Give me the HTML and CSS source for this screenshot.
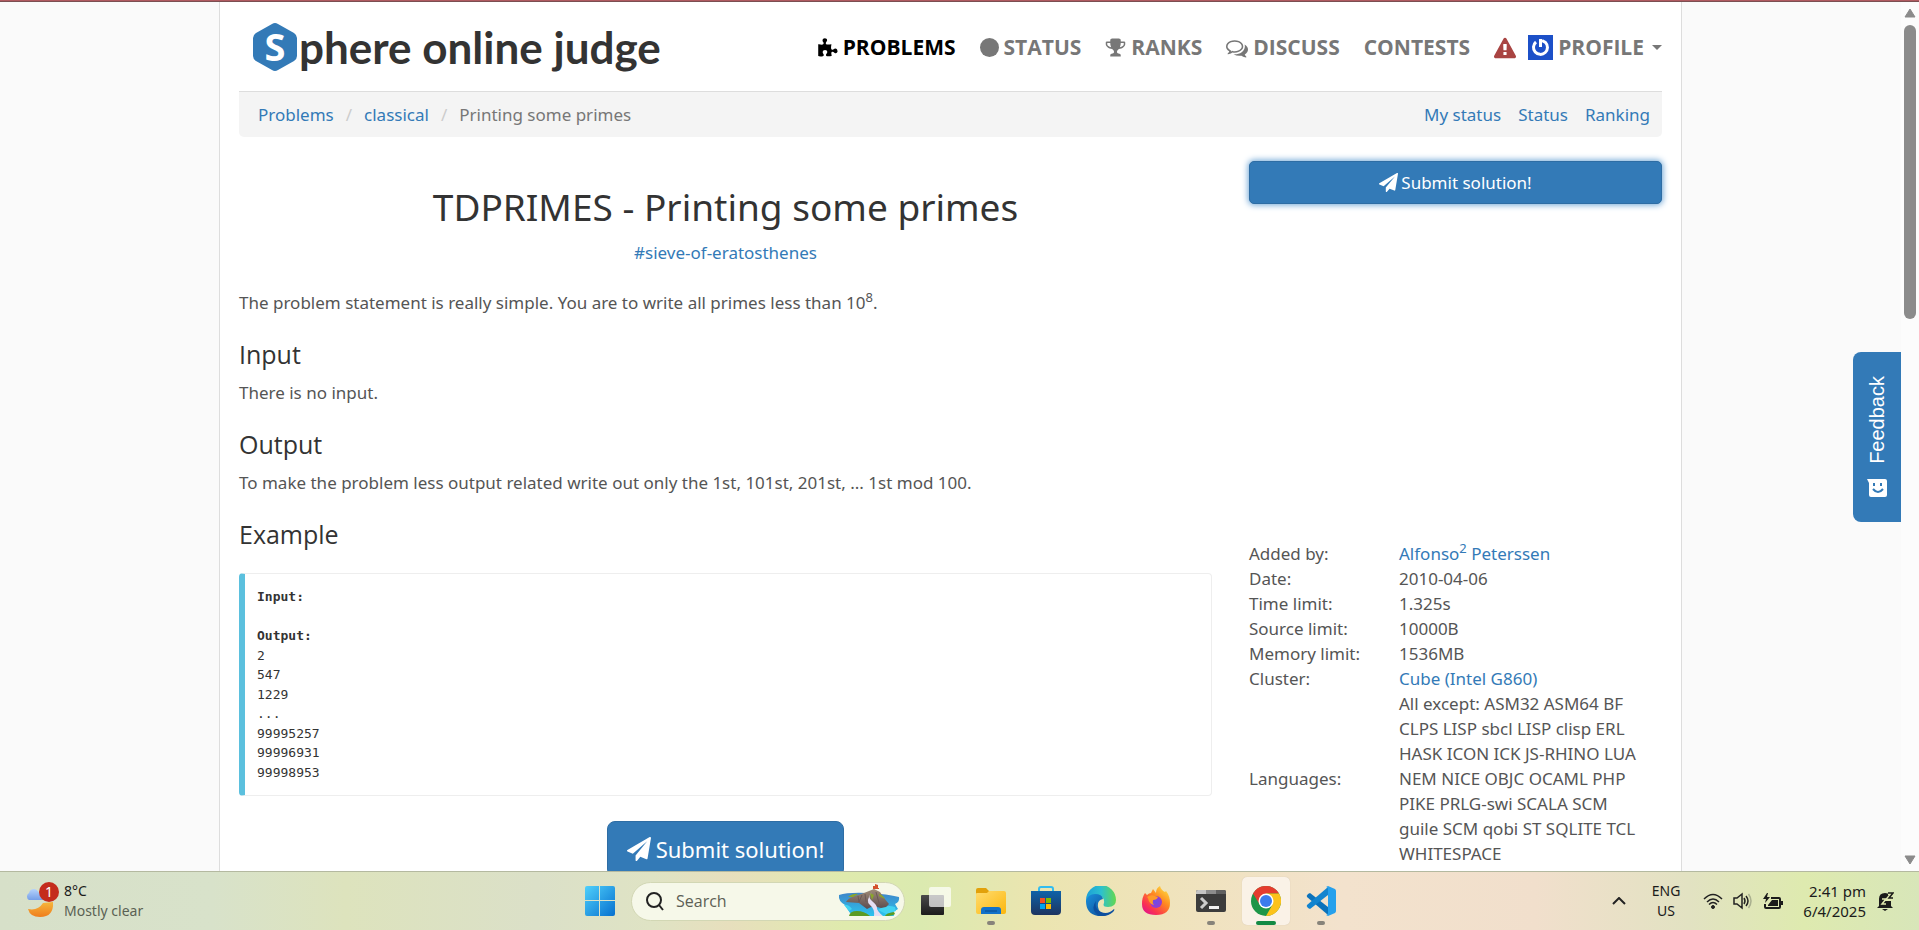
FILE: index.html
```html
<!DOCTYPE html>
<html lang="en">
<head>
<meta charset="utf-8">
<title>SPOJ.com - Problem TDPRIMES</title>
<link rel="stylesheet" href="styles.css">
</head>
<body>
<svg class="defs" width="0" height="0" aria-hidden="true">
  <defs>
    <symbol id="plane" viewBox="0 0 1792 1792"><path fill="currentColor" d="M1764 11q33 24 27 64l-256 1536q-5 29-32 45-14 8-31 8-11 0-24-5l-453-185-242 295q-18 23-49 23-13 0-22-4-19-7-30.500-23.500T640 1728v-349l864-1059-1069 925-395-162q-37-14-40-55-2-40 32-59L1696 9q15-9 32-9 20 0 36 11z"/></symbol>
    <linearGradient id="gWin" x1="0" y1="0" x2="1" y2="1"><stop offset="0" stop-color="#4fd0fb"/><stop offset="1" stop-color="#0670cf"/></linearGradient>
    <linearGradient id="gMoon" x1="0" y1="0" x2="0" y2="1"><stop offset="0" stop-color="#f6b73c"/><stop offset="1" stop-color="#ef7d1c"/></linearGradient>
    <linearGradient id="gCloud" x1="0" y1="0" x2="0" y2="1"><stop offset="0" stop-color="#b5d3fb"/><stop offset="1" stop-color="#769fe8"/></linearGradient>
    <linearGradient id="gDark" x1="0" y1="0" x2="0" y2="1"><stop offset="0" stop-color="#4a4a4a"/><stop offset="1" stop-color="#1c1c1c"/></linearGradient>
    <linearGradient id="gFold" x1="0" y1="0" x2="1" y2="1"><stop offset="0" stop-color="#ffdc70"/><stop offset="1" stop-color="#fcb70c"/></linearGradient>
    <linearGradient id="gStore" x1="0" y1="0" x2="0" y2="1"><stop offset="0" stop-color="#0f62a8"/><stop offset="1" stop-color="#1d3460"/></linearGradient>
    <linearGradient id="gEdge" x1="0" y1="0" x2="1" y2="0"><stop offset="0" stop-color="#1c9fd8"/><stop offset="0.500" stop-color="#2cc0cf"/><stop offset="1" stop-color="#63d850"/></linearGradient>
    <linearGradient id="gEdge2" x1="0" y1="0" x2="1" y2="1"><stop offset="0" stop-color="#1b8fdb"/><stop offset="1" stop-color="#0c4a94"/></linearGradient>
    <linearGradient id="gFox" x1="1" y1="0" x2="0.200" y2="1"><stop offset="0" stop-color="#fff24a"/><stop offset="0.450" stop-color="#ff8a20"/><stop offset="0.800" stop-color="#fb3350"/><stop offset="1" stop-color="#e3158a"/></linearGradient>
    <radialGradient id="gFoxIn"><stop offset="0" stop-color="#6b4de8"/><stop offset="1" stop-color="#9a3bc9"/></radialGradient>
    <linearGradient id="gSea" x1="0" y1="0" x2="0" y2="1"><stop offset="0" stop-color="#3f86c9"/><stop offset="1" stop-color="#2cc3ee"/></linearGradient>
    <linearGradient id="gRock" x1="0" y1="0" x2="0" y2="1"><stop offset="0" stop-color="#a08c77"/><stop offset="1" stop-color="#5c4c50"/></linearGradient>
  </defs>
</svg>

<div class="viewport">
  <div class="scroll-area">
    <div class="container">
      <header class="header">
        <a class="logo" href="#" aria-label="Sphere online judge">
          <span class="logo-mark">
            <svg width="44" height="48" viewBox="0 0 44 48" aria-hidden="true"><path fill="#337ab7" d="M19 1q3-2 6 0l16 9q3 2 3 5v18q0 3-3 5l-16 9q-3 2-6 0L3 38q-3-2-3-5V15q0-3 3-5z"/></svg>
            <span class="logo-s">S</span>
          </span>
          <span class="logo-text">phere online judge</span>
        </a>
        <nav class="nav">
          <a class="active" href="#"><svg width="20" height="20" viewBox="70 -50 1720 1720" aria-hidden="true"><path fill="currentColor" d="M1755 1062q0 81-44.500 135T1587 1251q-41 0-77.500-17.500t-59-38-56.500-38-71-17.500q-110 0-110 124 0 39 16 115t15 115v5q-22 0-33 1-34 3-97.500 11.500T997 1525t-98 5q-61 0-103-26.500t-42-83.500q0-37 17.500-71t38-56.500 38-59T865 1156q0-79-54-123.500T675 988q-84 0-143 45.500T473 1161q0 43 15 83t33.500 64.500 33.500 53 15 50.500q0 45-46 89-37 35-117 35-95 0-245-24l-55-8-18-3V484q2 1 17.500 3.500t34 5T148 496q150 24 245 24 80 0 117-35 46-44 46-89 0-22-15-50.500t-33.500-53T474 228t-15-83q0-82 59-127.500T662-28q80 0 134 44.500T850 140q0 41-17.500 77.500t-38 59-38 56.500-17.500 71q0 57 42 83.500T884 514q64 0 180-15t163-17v2q-1 2-3.500 17.500t-5 34T1215 551q-24 150-24 245 0 80 35 117 44 46 89 46 22 0 50.500-15t53-33.500T1483 877t83-15q82 0 127.500 59t45.500 143z"/></svg>PROBLEMS</a>
          <a href="#"><svg width="19" height="19" viewBox="0 0 19 19" aria-hidden="true"><circle cx="9.500" cy="9.500" r="9.500" fill="currentColor"/></svg>STATUS</a>
          <a href="#"><svg width="21" height="21" viewBox="0 64 1792 1664" aria-hidden="true"><path fill="currentColor" d="M522 883q-74-162-74-371H192v96q0 78 94.500 162T522 883zm1078-275v-96h-256q0 209-74 371 141-29 235.500-113t94.500-162zm128-128v128q0 71-41.500 143t-112 130-173 97.500T1186 1021q-42 54-95 95-38 34-52.500 72.500T1024 1280q0 54 30.500 91t97.500 37q75 0 133.500 45.500T1344 1568v64q0 14-9 23t-23 9H480q-14 0-23-9t-9-23v-64q0-69 58.500-114.500T640 1408q67 0 97.500-37t30.500-91q0-53-14.500-91.500T701 1116q-53-41-95-95-113-5-215.500-42.500t-173-97.500-112-130T64 608V480q0-40 28-68t68-28h288v-96q0-66 47-113t113-47h576q66 0 113 47t47 113v96h288q40 0 68 28t28 68z"/></svg>RANKS</a>
          <a href="#"><svg width="22" height="22" viewBox="0 0 1792 1792" aria-hidden="true"><path fill="currentColor" d="M704 384q-153 0-286 52T206.500 577 128 768q0 82 53 158t149 132l97 56-35 84q34-20 62-39l44-31 53 10q78 14 153 14 153 0 286-52t211.500-141T1280 768t-78.500-191T990 436t-286-52zm0-128q191 0 353.500 68.500T1314 511t94 257-94 257-256.500 186.500T704 1280q-86 0-176-16-124 88-278 128-36 9-86 16h-3q-11 0-20.500-8t-11.500-21q-1-3-1-6.500t.5-6.500 2-6l2.500-5 3.500-5.500 4-5 4.500-5 4-4.500q5-6 23-25t26-29.500 22.500-29 25-38.500 20.500-44q-124-72-195-177T0 768q0-139 94-257t256.500-186.500T704 256zm822 1169q10 24 20.500 44t25 38.500 22.500 29 26 29.500 23 25q1 1 4 4.500t4.500 5 4 5 3.500 5.500l2.500 5 2 6 .5 6.500-1 6.500q-3 14-13 22t-22 7q-50-7-86-16-154-40-278-128-90 16-176 16-271 0-472-132 58 4 88 4 161 0 309-45t264-129q125-92 192-212t67-254q0-77-23-152 129 71 204 178t75 230q0 120-71 224.500T1526 1425z"/></svg>DISCUSS</a>
          <a href="#">CONTESTS</a>
          <span class="account">
            <a class="warn" href="#" aria-label="Warning"><svg width="22" height="22" viewBox="0 -60 1792 1792" aria-hidden="true"><path fill="currentColor" d="M1024 1375v-190q0-14-9.500-23.500T992 1152H800q-13 0-22.500 9.500T768 1185v190q0 14 9.500 23.500t22.500 9.500h192q13 0 22.500-9.500t9.500-23.500zm-2-374l18-459q0-12-10-19-13-11-24-11H786q-11 0-24 11-10 7-10 21l17 457q0 10 10 16.500t24 6.500h185q14 0 23.500-6.500t10.500-16.500zm-14-934l768 1408q35 63-2 126-17 29-46.500 46t-63.500 17H128q-34 0-63.500-17T18 1601q-37-63-2-126L784 67q17-31 47-49t65-18 65 18 47 49z"/></svg></a>
            <a href="#"><svg width="25" height="25" viewBox="0 0 25 25" aria-hidden="true"><rect width="25" height="25" fill="#1c50c8"/><path d="M8 7a7 7 0 1 0 9.500.5l-3.500-2" fill="none" stroke="#fff" stroke-width="3"/><path d="M12.500 4v8" stroke="#fff" stroke-width="3"/></svg>PROFILE<i class="caret"></i></a>
          </span>
        </nav>
      </header>

      <div class="crumb-bar">
        <ol class="crumbs">
          <li><a href="#">Problems</a></li>
          <li><a href="#">classical</a></li>
          <li>Printing some primes</li>
        </ol>
        <div class="crumb-links"><a href="#">My status</a><a href="#">Status</a><a href="#">Ranking</a></div>
      </div>

      <div class="row">
        <main class="problem">
          <h1>TDPRIMES - Printing some primes</h1>
          <div class="tags"><a href="#">#sieve-of-eratosthenes</a></div>
          <p>The problem statement is really simple. You are to write all primes less than 10<sup>8</sup>.</p>
          <h2>Input</h2>
          <p>There is no input.</p>
          <h2>Output</h2>
          <p>To make the problem less output related write out only the 1st, 101st, 201st, ... 1st mod 100.</p>
          <h2>Example</h2>
<pre><b>Input:</b>

<b>Output:</b>
2
547
1229
...
99995257
99996931
99998953</pre>
          <div class="submit-row"><button class="btn btn-lg" type="button"><svg width="24" height="24" aria-hidden="true"><use href="#plane"/></svg>Submit solution!</button></div>
        </main>
        <aside class="side">
          <button class="btn btn-focus" type="button"><svg width="19" height="19" aria-hidden="true"><use href="#plane"/></svg>Submit solution!</button>
          <table class="info">
            <tr><th scope="row">Added by:</th><td><a href="#">Alfonso<sup>2</sup> Peterssen</a></td></tr>
            <tr><th scope="row">Date:</th><td>2010-04-06</td></tr>
            <tr><th scope="row">Time limit:</th><td>1.325s</td></tr>
            <tr><th scope="row">Source limit:</th><td>10000B</td></tr>
            <tr><th scope="row">Memory limit:</th><td>1536MB</td></tr>
            <tr><th scope="row">Cluster:</th><td><a href="#">Cube (Intel G860)</a></td></tr>
            <tr><th scope="row">Languages:</th><td>All except: ASM32 ASM64 BF CLPS LISP sbcl LISP clisp ERL HASK ICON ICK JS-RHINO LUA NEM NICE OBJC OCAML PHP PIKE PRLG-swi SCALA SCM guile SCM qobi ST SQLITE TCL WHITESPACE</td></tr>
          </table>
        </aside>
      </div>
    </div>
  </div>

  <button class="feedback" type="button">
    <svg width="20" height="20" viewBox="0 0 20 20" aria-hidden="true"><path fill="#fff" d="M0 1h18q2 0 2 2v14q0 2-2 2H4q-2 0-2-2V5z"/><path d="M6 11q5 6 10 0" fill="none" stroke="#337ab7" stroke-width="2"/><path d="M7 5v3M14 5v3" stroke="#337ab7" stroke-width="2"/></svg>
    <span>Feedback</span>
  </button>

  <div class="scrollbar" aria-hidden="true">
    <svg width="12" height="10" viewBox="0 0 12 10"><path d="M6 1l5 8H1z" fill="#8b8b8b" stroke="#8b8b8b" stroke-linejoin="round"/></svg>
    <div class="thumb"></div>
    <svg class="down" width="12" height="10" viewBox="0 0 12 10"><path d="M6 9l5-8H1z" fill="#8b8b8b" stroke="#8b8b8b" stroke-linejoin="round"/></svg>
  </div>
</div>

<footer class="taskbar">
  <div class="weather">
    <span class="weather-icon">
      <svg width="30" height="34" viewBox="0 0 30 34" aria-hidden="true"><path d="M3 25q10 2 15-6l10-1q1 15-13 15-10 0-12-8z" fill="url(#gMoon)"/><path d="M4 16a4 4 0 0 1 0-7q1-4 5-4 3 0 5 4 5 0 6 7z" fill="url(#gCloud)"/></svg>
      <span class="badge">1</span>
    </span>
    <div class="two-line"><span>8°C</span><span class="muted">Mostly clear</span></div>
  </div>

  <div class="apps">
    <button class="app" type="button" aria-label="Start"><svg width="30" height="30" viewBox="0 0 30 30"><path fill="url(#gWin)" d="M2 0h12v14H0V2q0-2 2-2zM15 0h13q2 0 2 2v12H15zM0 15h14v15H2q-2 0-2-2zM15 15h15v13q0 2-2 2H15z"/></svg></button>
    <label class="search">
      <svg width="18" height="19" viewBox="0 0 18 19" aria-hidden="true"><circle cx="8" cy="8" r="7" fill="none" stroke="#222" stroke-width="2"/><path d="M13 13l4 5" stroke="#222" stroke-width="2"/></svg>
      <input type="text" placeholder="Search" aria-label="Search">
      <svg width="62" height="34" viewBox="0 0 62 34" aria-hidden="true"><path d="M1 11Q10 8 30 9T61 13q1 5-4 7l3 5-5 3 1 4H18l-6-3-2-3-3-5Q0 17 1 11z" fill="url(#gSea)"/><path d="M6 21q4-1 8 4l-3 2zM40 26q8-6 17-3l1 4-10 3z" fill="#42d3f2"/><path d="M8 18q2-4 9-6l9-3 10-4 6 3 4 6 5 6-3 3-5 1-8-2-6 3-8-6z" fill="url(#gRock)"/><path d="M10 13q5-4 10-3l-5 3zM41 10q5 2 6 5l-6-3zM32 9l4 2-2 5z" fill="#8aa52a"/><path d="M20 12l1 6 3-7M27 10l1 8M38 8l3 11" fill="none" stroke="#6a5856"/><path d="M34 8q-5 5 0 9t5 7 6 8h-9q1-7-4-11t2-13z" fill="#e5def2"/><path d="M11 32q1-5 8-5t13 5zM47 32q1-3 9-4l1 2q-3 2-10 2z" fill="#5b9b23"/><path d="M35 5V2h2V0l3 1v3h1v1z" fill="#d4512e"/></svg>
    </label>
    <button class="app" type="button" aria-label="Task view"><svg width="30" height="28" viewBox="0 0 30 28"><rect y="8" width="23" height="20" rx="1" fill="url(#gDark)"/><rect x="8" width="22" height="20" rx="2" fill="#fff" fill-opacity="0.700"/></svg></button>
    <button class="app running" type="button" aria-label="File Explorer"><svg width="30" height="28" viewBox="0 0 30 28"><path d="M0 3q0-2 2-2h8l3 3h15v8H0z" fill="#e2a10b"/><path d="M0 7q0-1 1-1h10l2-2h15q2 0 2 2v19q0 2-2 2H2q-2 0-2-2z" fill="url(#gFold)"/><path d="M5 27v-4q0-3 3-3h14q3 0 3 3v4z" fill="#1272c9"/><path d="M9 24h12" stroke="#0b4a8c" stroke-width="1"/></svg></button>
    <button class="app" type="button" aria-label="Store"><svg width="30" height="30" viewBox="0 0 30 30"><path d="M8 6V3q0-2 2-2h10q2 0 2 2v3" fill="none" stroke="#33bdf0" stroke-width="2"/><path d="M0 5h30v20q0 4-4 4H4q-4 0-4-4z" fill="url(#gStore)"/><path d="M9 12h5v5H9z" fill="#f25022"/><path d="M15 12h5v5h-5z" fill="#7fba00"/><path d="M9 18h5v5H9z" fill="#00a4ef"/><path d="M15 18h5v5h-5z" fill="#ffb900"/></svg></button>
    <button class="app" type="button" aria-label="Edge"><svg width="30" height="30" viewBox="0 0 30 30"><path d="M0 14A15 15 0 0 1 30 14q0 7-8 7-6 0-4-4 1-7-7-7T0 17z" fill="url(#gEdge)"/><path d="M0 15q2-7 9-7 7 0 8 5-6 1-5 8 1 8 11 7-6 3-11 2Q0 28 0 15z" fill="url(#gEdge2)"/><path d="M10 15q-2 8 5 11t13-3q1 1-1 3-7 6-15 3Q4 23 10 15z" fill="#0d4f9e"/></svg></button>
    <button class="app" type="button" aria-label="Firefox"><svg width="28" height="30" viewBox="0 0 28 30"><path d="M3 7l2 2q2-2 4-2l2-4 3 4q0-5 4-7 1 4 5 6l1-1q4 5 4 12 0 12-14 12T0 18Q0 11 3 7z" fill="url(#gFox)"/><circle cx="14" cy="16" r="6" fill="url(#gFoxIn)"/><path d="M5 11q4-3 8-1l3 1q-1 3-5 3-1 3 1 5-5-1-6-7z" fill="#ff9a26"/></svg></button>
    <button class="app running" type="button" aria-label="Terminal"><svg width="30" height="22" viewBox="0 0 30 22"><rect width="30" height="22" rx="2" fill="#3c3c3c"/><path d="M0 4V2q0-2 2-2h8v4z" fill="#c4c4c4"/><path d="M10 0h10v4H10z" fill="#8c8c8c"/><path d="M20 0h8q2 0 2 2v2H20z" fill="#606060"/><path d="M5 8l5 5-5 5" fill="none" stroke="#ccc" stroke-width="3"/><path d="M13 16h10v3H13z" fill="#f0f0f0"/></svg></button>
    <button class="app running current" type="button" aria-label="Chrome"><svg width="30" height="30" viewBox="0 0 30 30"><circle cx="15" cy="15" r="15" fill="#1e9648"/><path d="M2 7.500A15 15 0 0 1 28 7.500H15L9 19z" fill="#e53c2e"/><path d="M28 7.500A15 15 0 0 1 15 30l6.500-11.500L15 7.500z" fill="#fcc21b"/><circle cx="15" cy="15" r="7.500" fill="#fff"/><circle cx="15" cy="15" r="6" fill="#3b7bec"/></svg></button>
    <button class="app running" type="button" aria-label="Visual Studio Code"><svg width="30" height="30" viewBox="0 0 30 30"><path d="M2 8l2-1 18 14v8L1 11q-1-1 1-3z" fill="#0b72bb"/><path d="M2 22l2 1L22 9V1L1 19q-1 1 1 3z" fill="#1284cf"/><path d="M22 0l7 3q1 1 1 2v20q0 1-1 2l-7 3-2-1q2 0 2-2V3q0-2-2-2z" fill="#26a0ec"/></svg></button>
  </div>

  <div class="tray">
    <svg width="14" height="8" viewBox="0 0 14 8" aria-hidden="true"><path d="M1 7l6-6 6 6" fill="none" stroke="#222" stroke-width="2"/></svg>
    <div class="two-line lang"><span>ENG</span><span>US</span></div>
    <div class="status">
      <svg width="20" height="16" viewBox="0 0 20 16" fill="none" stroke="#222" aria-hidden="true"><path stroke-width="1.500" d="M1 6q9-9 18 0M4 9q6-6 12 0M6 11.500q4-4 8 0"/><circle cx="10" cy="14" r="1.500" fill="#222"/></svg>
      <svg width="20" height="18" viewBox="0 0 20 18" fill="none" stroke="#222" aria-hidden="true"><path stroke-width="1.500" d="M1 6h3l5-4v14l-5-4H1zM11 6q2 3 0 6M13 4q4 5 0 10"/><path d="M15.500 2q5 7 0 14" stroke="#aab08f" stroke-width="1.500"/></svg>
      <svg width="20" height="17" viewBox="0 0 20 17" aria-hidden="true"><path d="M8 5h8q1 0 1 1v8q0 1-1 1H3q-1 0-1-1v-3" fill="none" stroke="#1b1b1b" stroke-width="2"/><path d="M5 13v-1l4-5h6v6zM18 8h2v4h-2zM4 0L0 6h3l-1 4 5-6H4l1-4z" fill="#1b1b1b"/></svg>
    </div>
    <div class="two-line clock"><span>2:41 pm</span><span>6/4/2025</span></div>
    <svg width="17" height="19" viewBox="0 0 17 19" aria-hidden="true"><path d="M2 14V7q0-6 6-6 6 0 6 6v7l2 2H0zM5 17h6l-3 2z" fill="#1b1b1b"/><path d="M5 7h4l-4 5h4" fill="none" stroke="#dfe8b0" stroke-width="1.500"/><path d="M11 1h5l-5 6h5" fill="none" stroke="#dfe8b0" stroke-width="4"/><path d="M11 1h5l-4 5h4" fill="none" stroke="#1b1b1b" stroke-width="1.500"/></svg>
  </div>
</footer>
</body>
</html>
```

FILE: styles.css
```css
* { box-sizing: border-box; }

body {
  margin: 0;
  height: 100vh;
  display: flex;
  flex-direction: column;
  overflow: hidden;
  border-top: 1px solid #b05a60;
  background: #fafafa;
  color: #555;
  font: 17px/25px "Noto Sans", "Open Sans", sans-serif;
}

a { color: #337ab7; text-decoration: none; }
button { font: inherit; border: 0; padding: 0; background: none; }
svg { display: block; flex: none; }
.defs { position: absolute; }

/* browser viewport */
.viewport {
  position: relative;
  flex: 1;
  min-height: 0;
  display: flex;
  border-top: 1px solid #7b4f52;
}
.scroll-area { flex: 1; min-width: 0; overflow: hidden; }

.scrollbar {
  width: 18px;
  display: flex;
  flex-direction: column;
  align-items: center;
  padding: 6px 0;
  gap: 7px;
  background: #fcfcfc;
}
.thumb { width: 12px; height: 294px; border-radius: 6px; background: #8b8b8b; }
.scrollbar .down { margin-top: auto; }

.container {
  max-width: 1463px;
  min-height: 100%;
  margin: 0 auto;
  padding: 0 19px;
  background: #fff;
  border: solid #ddd;
  border-width: 0 1px;
}

/* header */
.header {
  display: flex;
  justify-content: space-between;
  align-items: center;
  height: 89px;
}
.logo { display: flex; align-items: center; padding-left: 14px; color: #333; }
.logo-mark { position: relative; }
.logo-s {
  position: absolute;
  inset: 0;
  color: #fff;
  font: bold 38px/46px "Noto Sans", sans-serif;
  text-align: center;
}
.logo-text { font: bold 44px/48px Lato, sans-serif; padding-left: 2px; }

.nav {
  display: flex;
  align-items: center;
  gap: 24px;
  padding-top: 2px;
  font-family: "Open Sans", sans-serif;
  font-size: 21px;
  font-weight: 700;
}
.nav a { display: flex; align-items: center; gap: 5px; color: #777; }
.nav .active { color: #000; }
.account { display: flex; align-items: center; gap: 12px; }
.nav .warn { color: #a94442; }
.caret {
  margin-left: 3px;
  border: solid transparent;
  border-width: 5px 5px 0;
  border-top-color: #777;
}

/* breadcrumb */
.crumb-bar {
  display: flex;
  justify-content: space-between;
  padding: 10px 12px 10px 19px;
  background: #f4f4f4;
  border-top: 1px solid #ddd;
  border-radius: 0 0 5px 5px;
}
.crumbs { display: flex; margin: 0; padding: 0; list-style: none; color: #777; }
.crumbs li + li::before { content: "/"; padding: 0 12px; color: #ccc; }
.crumb-links { display: flex; gap: 17px; }

/* content */
.row { display: grid; grid-template-columns: 973fr 413fr; gap: 37px; padding-top: 24px; }
h1, h2 { color: #333; font-weight: 400; }
h1 { margin: 25px 0 12px; font-size: 37px; line-height: 42px; text-align: center; }
h2 { margin: 25px 0 12px; font: 25px/28px "Open Sans", sans-serif; }
p { margin: 0 0 12px; }
.tags { margin-bottom: 25px; text-align: center; }
sup { font-size: 13px; line-height: 0; vertical-align: 7px; }

pre {
  margin: 25px 0 0;
  padding: 13px 12px 13px;
  border: 1px solid #eee;
  border-left: 6px solid #5bc0de;
  border-radius: 4px;
  color: #333;
  font: 13px/1.5 "DejaVu Sans Mono", monospace;
}

.btn {
  display: flex;
  justify-content: center;
  align-items: center;
  gap: 3px;
  color: #fff;
  background: #337ab7;
  border: 1px solid #2e6da4;
  border-radius: 5px;
}
.btn-focus { width: 100%; padding: 8px 12px; box-shadow: 0 0 6px 1px #6fa6d6; }
.submit-row { display: flex; justify-content: center; padding: 25px 0; }
.btn-lg { padding: 12px 19px; font-size: 22px; line-height: 30px; border-radius: 8px; gap: 5px; }

.info { width: 100%; margin-top: 337px; border-collapse: collapse; }
.info th { width: 150px; padding: 0; font-weight: 400; text-align: left; }
.info td { padding: 0 19px 0 0; }

/* feedback tab */
.feedback {
  position: absolute;
  top: 350px;
  right: 18px;
  width: 48px;
  height: 170px;
  display: flex;
  flex-direction: column-reverse;
  align-items: center;
  gap: 14px;
  padding: 24px 0;
  color: #fff;
  background: #337ab7;
  border-radius: 8px 0 0 8px;
  font: 20px/24px "Liberation Sans", sans-serif;
}
.feedback span { writing-mode: sideways-lr; }

/* taskbar */
.taskbar {
  height: 59px;
  display: grid;
  grid-template-columns: 1fr auto 1fr;
  align-items: center;
  border-top: 1px solid #b4b9a0;
  background: linear-gradient(90deg, #d7e0c9 0%, #d8e2ca 11%, #dde3bd 18%, #dbe0c8 28%, #dfe3c4 34%, #e7dfbd 38%, #dfeaad 44%, #dbeab0 48%, #ebe5b0 54%, #efe3ba 60%, #f3e2cd 70%, #f1dfcc 80%, #e2e2c2 88%, #deeaaf 94%, #d8e6b9 100%);
  color: #1b1b1b;
  font-size: 14px;
  line-height: 20px;
}
.two-line { display: flex; flex-direction: column; }
.muted { color: #5b6154; }
.weather { display: flex; align-items: center; gap: 9px; padding-left: 25px; }
.weather-icon { position: relative; width: 30px; }
.badge {
  position: absolute;
  top: -2px;
  right: -4px;
  width: 20px;
  height: 20px;
  border-radius: 50%;
  background: #c42b1c;
  color: #fff;
  text-align: center;
}

.apps { display: flex; align-items: center; gap: 7px; padding-left: 2px; }
.app {
  position: relative;
  width: 48px;
  height: 48px;
  display: grid;
  place-items: center;
  border-radius: 5px;
}
.running::after {
  content: "";
  position: absolute;
  bottom: 0;
  left: 20px;
  width: 8px;
  height: 4px;
  border-radius: 2px;
  background: #87837a;
}
.current { background: #faf2e7; box-shadow: 0 0 1px #cbbda8; }
.current::after { left: 14px; width: 20px; background: #138a43; }
.search {
  width: 274px;
  height: 39px;
  display: flex;
  align-items: center;
  gap: 12px;
  padding: 0 4px 0 14px;
  border: 1px solid #d2d7b4;
  border-radius: 20px;
  background: #f6f8e9;
}
.search input {
  flex: 1;
  min-width: 0;
  padding: 0;
  border: 0;
  outline: 0;
  background: none;
  font: 16px/24px "Open Sans", sans-serif;
}
.search input::placeholder { color: #5d5f55; }

.tray { display: flex; align-items: center; justify-content: flex-end; padding-right: 25px; }
.lang { margin: 0 23px 0 26px; text-align: center; }
.status { display: flex; align-items: center; gap: 10px; }
.clock { margin: 0 11px 0 20px; font-size: 15px; text-align: right; }
```
